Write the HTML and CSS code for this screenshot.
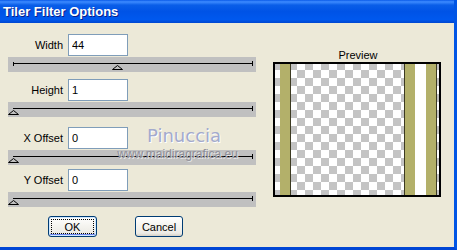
FILE: index.html
```html
<!DOCTYPE html>
<html lang="en">
<head>
    <meta charset="UTF-8">
    <meta name="viewport" content="width=device-width, initial-scale=1.0">
    <title>Tiler Filter Options</title>
    <link rel="stylesheet" href="styles.css">
</head>
<body>
    <div class="window">
        <div class="titlebar">Tiler Filter Options</div>

        <div class="content">
            <div class="main">
                <div class="controls">
                    <div class="row">
                        <div class="field">
                            <label for="width">Width</label>
                            <input type="text" id="width" value="44">
                        </div>
                        <svg class="slider" width="248" height="15" viewBox="0 0 248 15">
                            <rect width="248" height="15" fill="#c0c0c0"/>
                            <line x1="5" y1="6.5" x2="244" y2="6.5" stroke="#000"/>
                            <line x1="5.5" y1="5" x2="5.5" y2="9" stroke="#000"/>
                            <line x1="244.5" y1="4" x2="244.5" y2="9" stroke="#000"/>
                            <polygon points="109.5,8.5 104.5,12.5 114.5,12.5" fill="none" stroke="#000"/>
                        </svg>
                    </div>

                    <div class="row">
                        <div class="field">
                            <label for="height">Height</label>
                            <input type="text" id="height" value="1">
                        </div>
                        <svg class="slider" width="248" height="15" viewBox="0 0 248 15">
                            <rect width="248" height="15" fill="#c0c0c0"/>
                            <line x1="5" y1="6.5" x2="244" y2="6.5" stroke="#000"/>
                            <line x1="244.5" y1="4" x2="244.5" y2="9" stroke="#000"/>
                            <polygon points="5.5,8.5 0.5,12.5 10.5,12.5" fill="none" stroke="#000"/>
                        </svg>
                    </div>

                    <div class="row">
                        <div class="field">
                            <label for="xoffset">X Offset</label>
                            <input type="text" id="xoffset" value="0">
                        </div>
                        <svg class="slider" width="248" height="15" viewBox="0 0 248 15">
                            <rect width="248" height="15" fill="#c0c0c0"/>
                            <line x1="5" y1="6.5" x2="244" y2="6.5" stroke="#000"/>
                            <line x1="244.5" y1="4" x2="244.5" y2="9" stroke="#000"/>
                            <polygon points="5.5,8.5 0.5,12.5 10.5,12.5" fill="none" stroke="#000"/>
                        </svg>
                    </div>

                    <div class="row">
                        <div class="field">
                            <label for="yoffset">Y Offset</label>
                            <input type="text" id="yoffset" value="0">
                        </div>
                        <svg class="slider" width="248" height="15" viewBox="0 0 248 15">
                            <rect width="248" height="15" fill="#c0c0c0"/>
                            <line x1="5" y1="6.5" x2="244" y2="6.5" stroke="#000"/>
                            <line x1="244.5" y1="4" x2="244.5" y2="9" stroke="#000"/>
                            <polygon points="5.5,8.5 0.5,12.5 10.5,12.5" fill="none" stroke="#000"/>
                        </svg>
                    </div>
                </div>

                <div class="preview">
                    <div class="preview-label">Preview</div>
                    <svg class="preview-box" width="168" height="135" viewBox="0 0 168 135">
                        <defs>
                            <pattern id="checker" width="16" height="16" patternUnits="userSpaceOnUse">
                                <rect width="16" height="16" fill="#fff"/>
                                <rect width="8" height="8" fill="#c4c4c4"/>
                                <rect x="8" y="8" width="8" height="8" fill="#c4c4c4"/>
                            </pattern>
                        </defs>
                        <rect x="1" y="1" width="166" height="133" fill="url(#checker)"/>
                        <rect x="7" y="2" width="10" height="131" fill="#b3b06a"/>
                        <rect x="17" y="2" width="1" height="131" fill="#3c3a22"/>
                        <rect x="131" y="2" width="1" height="131" fill="#3c3a22"/>
                        <rect x="132" y="2" width="10" height="131" fill="#b3b06a"/>
                        <rect x="142" y="2" width="11" height="131" fill="#fff"/>
                        <rect x="153" y="2" width="10" height="131" fill="#b3b06a"/>
                        <rect x="163" y="2" width="1" height="131" fill="#3c3a22"/>
                        <rect x="1" y="1" width="166" height="133" fill="none" stroke="#000" stroke-width="2"/>
                    </svg>
                </div>
            </div>

            <div class="buttons">
                <button type="button" class="btn default">OK</button>
                <button type="button" class="btn">Cancel</button>
            </div>
        </div>

        <div class="watermark">
            <span class="wm-name">Pinuccia</span>
            <span class="wm-url">www.maidiragrafica.eu</span>
        </div>
    </div>
</body>
</html>
```

FILE: styles.css
```css
html, body { margin: 0; padding: 0; }
body { font-family: "Liberation Sans", Arial, sans-serif; font-size: 11px; color: #000; background: #ece9d8; }

.window {
    position: relative;
    width: 457px;
    height: 250px;
    box-sizing: border-box;
    background: #ece9d8;
    border-right: 3px solid #0055e5;
    border-bottom: 3px solid #0046d5;
    display: flex;
    flex-direction: column;
    overflow: hidden;
}

.titlebar {
    height: 23px;
    flex-shrink: 0;
    margin-right: -3px;
    padding-left: 3px;
    color: #fff;
    font-weight: bold;
    font-size: 13px;
    line-height: 23px;
    text-shadow: 1px 1px #0a1f8a;
    background: linear-gradient(to bottom, #0a5ae8 0%, #3d8bff 8%, #0a5ee8 22%, #0053e6 50%, #0058ee 85%, #0047d0 100%);
}

.content { flex: 1; display: flex; flex-direction: column; }

.main { display: flex; align-items: flex-start; }

.controls { padding: 11px 0 0 8px; width: 248px; }

.row { display: flex; flex-direction: column; }
.row + .row { margin-top: 7px; }
.row:nth-child(3) { margin-top: 10px; }
.row:nth-child(4) { margin-top: 4px; }

.field { display: flex; align-items: center; height: 22px; }
.field label { width: 55px; padding-right: 5px; text-align: right; white-space: nowrap; }
.field input {
    width: 60px;
    height: 22px;
    box-sizing: border-box;
    margin: 0;
    padding: 0 3px;
    border: 1px solid #7f9db9;
    background: #fff;
    font-family: inherit;
    font-size: 11px;
}

.slider { display: block; margin-top: 1px; }

.preview { margin-left: 17px; padding-top: 26px; width: 168px; }
.preview-label { text-align: center; line-height: 13px; margin-left: 2px; }
.preview-box { display: block; }

.buttons { display: flex; gap: 38px; padding-left: 48px; margin-top: 9px; }

.btn {
    height: 21px;
    width: 48px;
    padding: 0;
    border: 1px solid #003c74;
    border-radius: 3px;
    background: linear-gradient(to bottom, #ffffff 0%, #f4f3ee 50%, #ecebe6 85%, #d6d0c5 100%);
    font-family: inherit;
    font-size: 11px;
    color: #000;
}
.btn.default {
    width: 49px;
    box-shadow: inset 0 0 0 1px #cee7ff, inset 0 -1px 0 1px #6982ee;
    outline: 1px dotted #000;
    outline-offset: -4px;
}

.watermark {
    position: absolute;
    left: 115px;
    top: 124px;
    width: 125px;
    text-align: center;
    pointer-events: none;
}
.wm-name {
    display: block;
    margin-left: 32px;
    text-align: left;
    font-family: "DejaVu Sans", sans-serif;
    font-size: 18px;
    line-height: 24px;
    color: #a3aacd;
    text-shadow: 1px 1px 0 #fff;
}
.wm-url {
    display: block;
    font-size: 12px;
    line-height: 12px;
    color: #8e8e98;
    text-shadow: 1px 1px 0 #e4e4e4;
}
```
